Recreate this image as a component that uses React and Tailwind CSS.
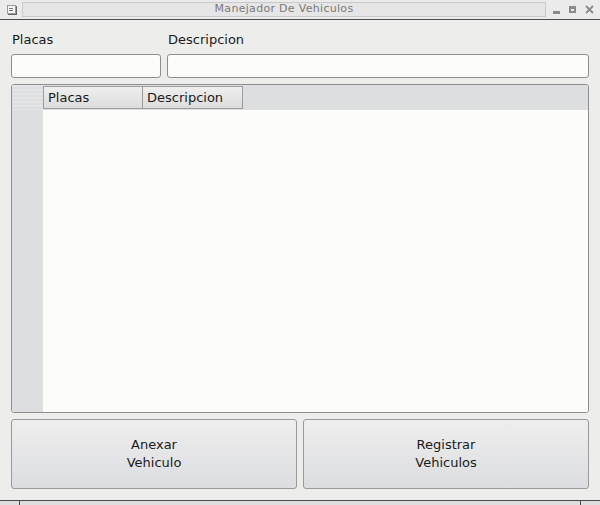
import React from "react";

const font = { fontFamily: '"DejaVu Sans", sans-serif' };

export default function App() {
  return (
    <div className="w-[600px] h-[505px] bg-[#edeeec] flex flex-col overflow-hidden text-[#1a1a1a]" style={font}>
      {/* Title bar */}
      <div className="h-[19px] flex items-center bg-[#ebebeb] shrink-0">
        <div className="w-[22px] flex justify-center">
          <div className="w-[9px] h-[9px] bg-[#f6f6f6] border border-[#9a9a9a] shadow-[1px_1px_0_#666] flex items-center justify-center">
            <div className="w-[4px] h-[3px] border-t border-b border-[#777]" />
          </div>
        </div>
        <div className="flex-1 h-[15px] border border-[#c9c9c9] bg-[#e6e6e6] flex items-center justify-center text-[11px] text-[#7a7a7a] tracking-[0.3px]">
          Manejador De Vehiculos
        </div>
        <div className="w-[54px] flex items-center justify-around px-[2px] text-[#888]">
          <div className="w-[7px] h-[3px] bg-[#8a8a8a] mt-[6px]" />
          <div className="w-[7px] h-[7px] border-[2px] border-t-[3px] border-[#8a8a8a]" />
          <svg width="9" height="9" viewBox="0 0 9 9">
            <path d="M1 1 L8 8 M8 1 L1 8" stroke="#8a8a8a" strokeWidth="1.8" />
          </svg>
        </div>
      </div>
      <div className="h-[1px] bg-[#4a4a4a] shrink-0" />

      {/* Content */}
      <div className="flex-1 flex flex-col px-[11px] pt-[10px]">
        <div className="grid grid-cols-[150px_1fr] gap-x-[6px]">
          <div className="h-[20px] leading-[20px] text-[13px] pl-[1px]">Placas</div>
          <div className="h-[20px] leading-[20px] text-[13px] pl-[1px]">Descripcion</div>
          <div className="mt-[4px] h-[24px] rounded-[3px] border border-[#8e8e8e] bg-[#fcfcfa]" />
          <div className="mt-[4px] h-[24px] rounded-[3px] border border-[#8e8e8e] bg-[#fcfcfa]" />
        </div>

        {/* Table */}
        <div className="mt-[6px] h-[329px] rounded-[3px] border border-[#8e8e8e] bg-[#fcfcfa] flex flex-col overflow-hidden">
          <div className="h-[25px] bg-[#dcdee0] flex items-center shrink-0">
            <div className="w-[31px] h-[25px] bg-[repeating-linear-gradient(180deg,#e4e5e6_0px,#e4e5e6_2px,#dcdee0_2px,#dcdee0_4px)]" />
            <div className="w-[100px] h-[23px] border border-[#9c9c9c] bg-gradient-to-b from-[#efefef] to-[#dcdcdc] text-[13px] leading-[21px] pl-[4px]">
              Placas
            </div>
            <div className="w-[100px] h-[23px] border border-l-0 border-[#9c9c9c] bg-gradient-to-b from-[#efefef] to-[#dcdcdc] text-[13px] leading-[21px] pl-[4px]">
              Descripcion
            </div>
          </div>
          <div className="flex-1 flex">
            <div className="w-[31px] bg-[#dcdee0]" />
            <div className="flex-1 bg-[#fcfcfa]" />
          </div>
        </div>

        {/* Buttons */}
        <div className="mt-[6px] grid grid-cols-2 gap-[6px]">
          <button className="h-[70px] rounded-[3px] border border-[#9a9a9a] bg-gradient-to-b from-[#eeeeee] to-[#dcdde0] text-[13px] leading-[18px] text-center">
            Anexar
            <br />
            Vehiculo
          </button>
          <button className="h-[70px] rounded-[3px] border border-[#9a9a9a] bg-gradient-to-b from-[#eeeeee] to-[#dcdde0] text-[13px] leading-[18px] text-center">
            Registrar
            <br />
            Vehiculos
          </button>
        </div>
      </div>

      {/* Bottom frame */}
      <div className="h-[1px] bg-[#4a4a4a] shrink-0" />
      <div className="h-[4px] bg-[#dedede] flex shrink-0">
        <div className="w-[20px] border-r border-[#4a4a4a]" />
        <div className="flex-1" />
        <div className="w-[20px] border-l border-[#4a4a4a]" />
      </div>
    </div>
  );
}
